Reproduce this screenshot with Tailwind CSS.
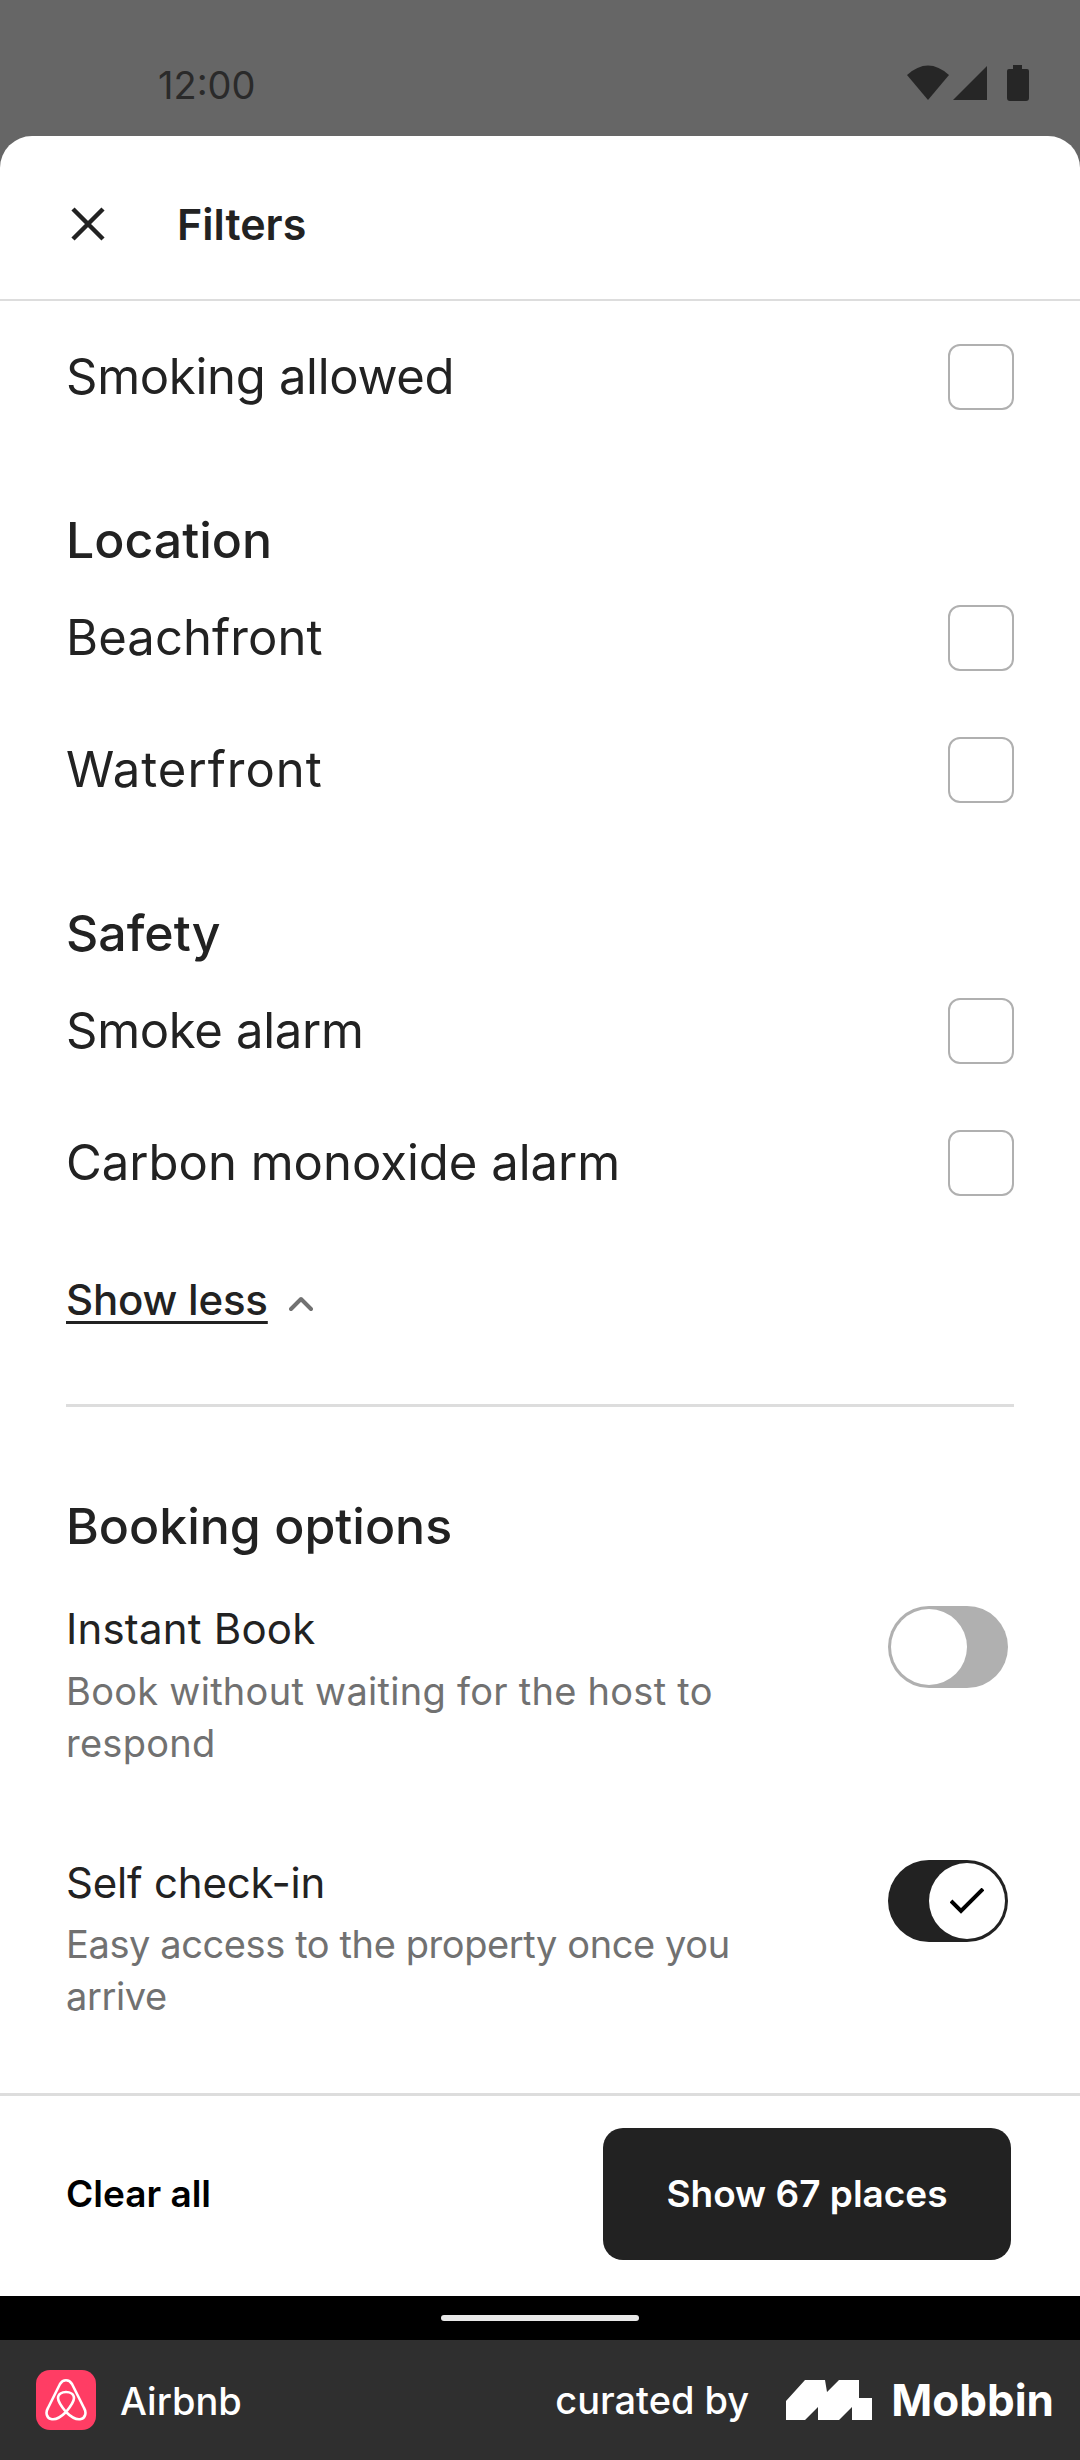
<!doctype html>
<html>
<head>
<meta charset="utf-8">
<script src="https://cdn.jsdelivr.net/npm/@tailwindcss/browser@4"></script>
</head>
<body class="bg-white">
<div class="w-[1080px] h-[2460px] flex flex-col overflow-hidden bg-[#666666] font-['Inter','Liberation_Sans',sans-serif] text-[#222222]">
  <div class="h-[136px] shrink-0 flex items-start justify-between pl-[158px] pr-[51px] pt-[65px]">
    <span class="text-[38px] leading-[40px] text-[#2a2a2a]">12:00</span>
    <div class="flex items-start gap-[4px]">
      <svg width="42" height="35" viewBox="0 0 42 35"><path d="M21 35 L0 10 Q21 -9 42 10 Z" fill="#262626"/></svg>
      <svg width="34" height="35" viewBox="0 0 34 35"><path d="M34 1 V35 H0 Z" fill="#262626"/></svg>
      <svg class="ml-[16px]" width="22" height="36" viewBox="0 0 22 36"><path d="M6 0 H15 V4 H20 Q22 4 22 6 V33 Q22 36 19 36 H3 Q0 36 0 33 V6 Q0 4 2 4 H6 Z" fill="#262626"/></svg>
    </div>
  </div>
  <div class="flex-1 min-h-0 bg-white rounded-t-[32px] flex flex-col">
    <header class="h-[165px] shrink-0 flex items-center border-b-2 border-[#dddddd] pl-[71px] pt-[12px]">
      <svg width="34" height="34" viewBox="0 0 34 34"><path d="M2 2 L32 32 M32 2 L2 32" stroke="#222222" stroke-width="4.5" fill="none"/></svg>
      <h1 class="ml-[72px] text-[43px] font-semibold leading-[48px]">Filters</h1>
    </header>
    <main class="flex-1 min-h-0 px-[66px] pt-[10px] flex flex-col">
      <div class="h-[132px] flex items-center justify-between text-[49px]"><span class="tracking-[-0.3px]">Smoking allowed</span><span class="w-[66px] h-[66px] rounded-[12px] border-2 border-[#b0b0b0]"></span></div>
      <h2 class="mt-[65px] h-[64px] flex items-center text-[50px] font-medium">Location</h2>
      <div class="h-[132px] flex items-center justify-between text-[49px]"><span class="tracking-[0.1px]">Beachfront</span><span class="w-[66px] h-[66px] rounded-[12px] border-2 border-[#b0b0b0]"></span></div>
      <div class="h-[132px] flex items-center justify-between text-[49px]"><span class="tracking-[1px]">Waterfront</span><span class="w-[66px] h-[66px] rounded-[12px] border-2 border-[#b0b0b0]"></span></div>
      <h2 class="mt-[65px] h-[64px] flex items-center text-[50px] font-medium">Safety</h2>
      <div class="h-[132px] flex items-center justify-between text-[49px]"><span class="tracking-[-0.3px]">Smoke alarm</span><span class="w-[66px] h-[66px] rounded-[12px] border-2 border-[#b0b0b0]"></span></div>
      <div class="h-[132px] flex items-center justify-between text-[49px]"><span>Carbon monoxide alarm</span><span class="w-[66px] h-[66px] rounded-[12px] border-2 border-[#b0b0b0]"></span></div>
      <div class="mt-[38px] h-[64px] flex items-center">
        <span class="text-[42px] font-medium tracking-[-0.2px] underline underline-offset-[6px] decoration-[3px]">Show less</span>
        <svg class="ml-[21px] mt-[10px]" width="24" height="16" viewBox="0 0 24 16"><path d="M2 13 L12 3 L22 13" stroke="#717171" stroke-width="4" fill="none" stroke-linecap="round" stroke-linejoin="round"/></svg>
      </div>
      <div class="mt-[73px] h-[3px] shrink-0 bg-[#dddddd]"></div>
      <h2 class="mt-[87px] h-[64px] flex items-center text-[50px] font-medium">Booking options</h2>
      <div class="mt-[45px] flex justify-between items-start">
        <div class="w-[700px]">
          <p class="text-[42px] leading-[52px] tracking-[0.2px]">Instant Book</p>
          <p class="mt-[10px] text-[38px] leading-[52px] tracking-[0.27px] text-[#717171]">Book without waiting for the host to respond</p>
        </div>
        <span class="mt-[3px] mr-[6px] w-[120px] h-[82px] rounded-full bg-[#b0b0b0] p-[3px] flex justify-start"><span class="w-[76px] h-[76px] rounded-full bg-white"></span></span>
      </div>
      <div class="mt-[88px] flex justify-between items-start">
        <div class="w-[700px]">
          <p class="text-[42px] leading-[52px] tracking-[-0.2px]">Self check-in</p>
          <p class="mt-[9px] text-[38px] leading-[52px] tracking-[-0.4px] text-[#717171]">Easy access to the property once you arrive</p>
        </div>
        <span class="mt-[3px] mr-[6px] w-[120px] h-[82px] rounded-full bg-[#222222] p-[3px] flex justify-end"><span class="w-[76px] h-[76px] rounded-full bg-white flex items-center justify-center"><svg width="34" height="26" viewBox="0 0 34 26"><path d="M1 13 L11 23 L33 1" stroke="#000000" stroke-width="4" fill="none"/></svg></span></span>
      </div>
    </main>
    <footer class="h-[203px] shrink-0 border-t-[3px] border-[#dddddd] flex items-center justify-between pl-[66px] pr-[69px] pb-[4px]">
      <span class="text-[37px] font-semibold text-black">Clear all</span>
      <span class="w-[408px] h-[132px] rounded-[20px] bg-[#222222] text-white text-[37px] font-semibold flex items-center justify-center">Show 67 places</span>
    </footer>
    <div class="h-[44px] shrink-0 bg-black flex items-center justify-center"><span class="w-[198px] h-[6px] rounded-full bg-[#e8e8e8]"></span></div>
    <div class="h-[120px] shrink-0 bg-[#2f2f2f] flex items-center justify-between pl-[36px] pr-[26px] text-white">
      <div class="flex items-center gap-[24px]">
        <span class="w-[60px] h-[60px] rounded-[14px] bg-[#ff3d64] flex items-center justify-center">
          <svg width="42" height="44" viewBox="0 0 42 44" fill="none" stroke="#fff" stroke-width="2.6" stroke-linejoin="round"><path d="M21 34 C16 28 13 24 13 20 C13 16 17 14 21 14 C25 14 29 16 29 20 C29 24 26 28 21 34 C15 40 10 42 6 41 C2 40 0 35 3 30 L15 6 C18 1 24 1 27 6 L39 30 C42 35 40 40 36 41 C32 42 27 40 21 34 Z"/></svg>
        </span>
        <span class="text-[38px] font-medium mt-[2px]">Airbnb</span>
      </div>
      <div class="flex items-center">
        <span class="text-[38px] font-medium">curated by</span>
        <svg class="ml-[37px]" width="86" height="40" viewBox="0 0 86 40"><path d="M0 21 L19 0 H39 L41 12 L53 0 H73 V18 H86 V40 H66 V27 L53 40 H32 V27 L19 40 H0 Z" fill="#fff"/></svg>
        <span class="ml-[19px] text-[44px] font-bold">Mobbin</span>
      </div>
    </div>
  </div>
</div>
</body>
</html>
